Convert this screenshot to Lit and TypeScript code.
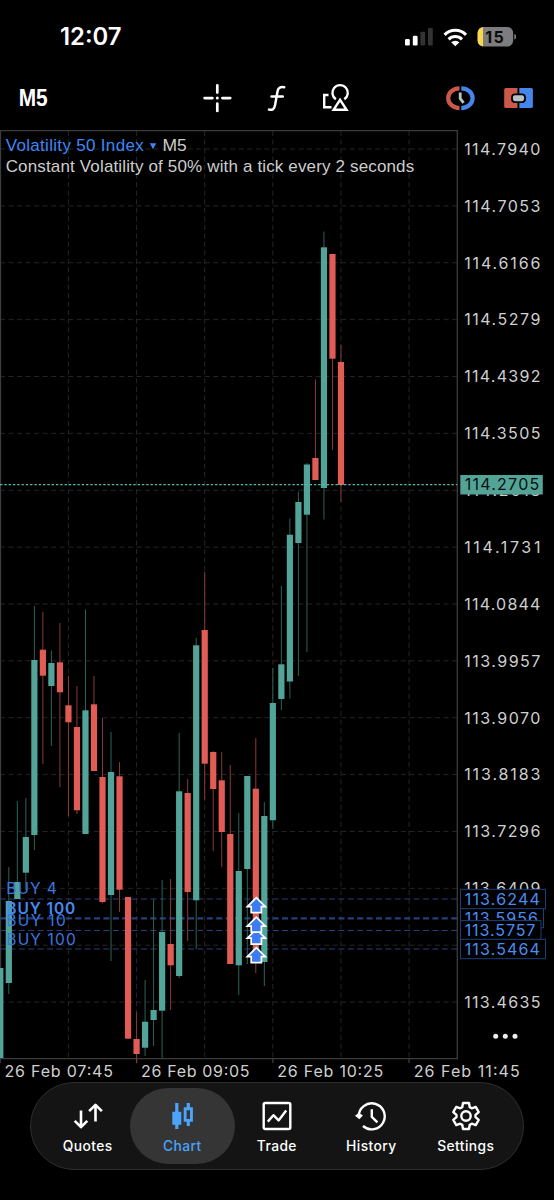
import { LitElement, html, svg, css } from "lit";
import { customElement } from "lit/decorators.js";

type Candle = [up: number, high: number, top: number, bottom: number, low: number];

const CANDLES: Candle[] = [
  [1, 968, 968, 1058, 1058],
  [1, 867, 901, 983, 994],
  [1, 801, 882, 899, 899],
  [1, 798, 837, 872.7, 890],
  [1, 606, 660, 835, 850],
  [0, 612, 649.7, 675.7, 764],
  [1, 650.5, 663, 686, 746],
  [0, 623, 662.3, 692.3, 787],
  [0, 676, 705.3, 722.3, 816],
  [0, 686, 727, 810.3, 814],
  [1, 609.5, 710.3, 834, 834],
  [0, 676, 704.3, 771, 771],
  [0, 718, 777, 902, 903.5],
  [1, 732, 772, 895, 961],
  [0, 762, 776.3, 889.7, 912],
  [0, 897, 897, 1038.7, 1038.7],
  [0, 1012, 1039, 1054, 1063],
  [1, 980, 1021.7, 1047.7, 1056],
  [1, 899.5, 1010, 1020, 1046],
  [1, 880, 932, 1010.7, 1058],
  [0, 879, 944, 965.3, 1010],
  [1, 733, 791.3, 976, 978],
  [0, 779, 793, 892, 941],
  [1, 638, 645.3, 900.3, 949],
  [0, 572, 630, 763.7, 799.5],
  [0, 751, 752, 789, 851],
  [0, 752, 780.3, 832, 867],
  [0, 765, 834, 964, 964],
  [1, 813, 871, 965.3, 995],
  [1, 776, 776, 869, 964],
  [0, 738, 788.7, 960, 973],
  [1, 802, 816, 962, 986],
  [1, 668, 703, 820.3, 829],
  [1, 586, 664.3, 699, 710],
  [1, 518.5, 534.7, 681.5, 698.5],
  [1, 491.5, 502, 543, 676],
  [1, 463, 464.5, 514.7, 652],
  [0, 379.5, 458, 480, 480],
  [1, 231.5, 247.3, 488, 519.5],
  [0, 254, 254, 358.7, 450],
  [0, 345, 362, 485, 502],
];

const PRICES = [
  "114.7940", "114.7053", "114.6166", "114.5279", "114.4392", "114.3505",
  "114.2618", "114.1731", "114.0844", "113.9957", "113.9070", "113.8183",
  "113.7296", "113.6409", "", "113.4635",
];
const TIMES: [number, number, string][] = [
  [4.5, 108.5, "26 Feb 07:45"], [141, 108.5, "26 Feb 09:05"],
  [277.3, 106, "26 Feb 10:25"], [413.7, 106, "26 Feb 11:45"],
];
const TABS = ["Quotes", "Chart", "Trade", "History", "Settings"];

const priceY = (i: number) => 149 + i * 56.873;
const timeX = (i: number) => 0.3 + i * 68.13;
const candleX = (i: number) => 0.3 + i * 8.517;

// Outline of a six-toothed gear centred at 16,16.
const gearPath = () => {
  const pts: string[] = [];
  for (let t = 0; t < 6; t++) {
    const a = t * 60 - 90;
    for (const [d, r] of [[-23, 9.6], [-13, 13.3], [13, 13.3], [23, 9.6]]) {
      const rad = ((a + d) * Math.PI) / 180;
      pts.push(`${(16 + r * Math.cos(rad)).toFixed(2)} ${(16 + r * Math.sin(rad)).toFixed(2)}`);
    }
  }
  return `M${pts.join("L")}Z`;
};

@customElement("price-chart")
class PriceChart extends LitElement {
  static styles = css`
    :host { display: block; }
    svg { display: block; width: 554px; height: 952px; }
    text { font-family: Inter, "Liberation Sans", sans-serif; }
    .grid { stroke: #252529; stroke-width: 1; stroke-dasharray: 5 3.53; }
    .frame { stroke: #3c3c3e; stroke-width: 1.3; fill: none; }
    .up { fill: #52a498; }
    .down { fill: #e05c54; }
    .wup { stroke: #2c6359; stroke-width: 1; }
    .wdown { stroke: #8a3a36; stroke-width: 1; }
    .last { stroke: #59b9a6; stroke-width: 1.4; stroke-dasharray: 2.4 1.9; }
    .order { stroke: #263f78; stroke-width: 1.2; stroke-dasharray: 6 3.4; }
    .heavy { stroke-width: 2.2; }
    .axis { fill: #cfcfcf; font-size: 16px; }
    .buy { fill: #3c78e0; font-size: 15.5px; }
    .bold { font-weight: 600; fill: #468bf5; }
    .tag { fill: #000; stroke: #1c3f78; stroke-width: 1; }
    .tagtext { fill: #4a8df2; font-size: 16px; }
    .now { fill: #53a497; }
    .nowtext { fill: #06110f; font-size: 16px; }
    .symbol, .desc { font-family: "Liberation Sans", Arial, sans-serif; font-size: 17px; }
    .symbol { fill: #3f86f6; }
    .desc { fill: #cdcdcd; }
    .arrow { fill: #3c7bf0; stroke: #fff; stroke-width: 1.7; }
    .dot { fill: #eee; }
  `;

  private candle([up, high, top, bottom, low]: Candle, i: number) {
    const x = candleX(i);
    return svg`
      <line class=${up ? "wup" : "wdown"} x1=${x} x2=${x} y1=${high} y2=${low}></line>
      <rect class=${up ? "up" : "down"} x=${x - 3.1} y=${top} width="6.2" height=${bottom - top}></rect>`;
  }

  private tag(y: number, w: number, label: string) {
    return svg`
      <rect class="tag" x="460.5" y=${y - 9.7} width=${w} height="19.4"></rect>
      <text class="tagtext" x="464.7" y=${y + 5.7} textLength=${w - 9.8}>${label}</text>`;
  }

  private buy(y: number, len: number, label: string, bold = false) {
    return svg`<text class="buy ${bold ? "bold" : ""}" x="6.3" y=${y} textLength=${len}>${label}</text>`;
  }

  render() {
    return html`<svg viewBox="0 130 554 952">
      ${PRICES.map((_, i) => svg`<line class="grid" x1="0" x2="461" y1=${priceY(i)} y2=${priceY(i)}></line>`)}
      ${[1, 2, 3, 4, 5, 6].map((i) => svg`<line class="grid" x1=${timeX(i)} x2=${timeX(i)} y1="131" y2="1058"></line>`)}
      ${[0, 2, 4, 6].map((i) => svg`<line class="frame" x1=${timeX(i)} x2=${timeX(i)} y1="1059" y2="1063"></line>`)}
      <path class="frame" d="M.5 1058.7V130.7H457.3V1058.7Z"></path>
      ${[899, 930.5, 949].map((y) => svg`<line class="order" x1="0" x2="457" y1=${y} y2=${y}></line>`)}
      <line class="order heavy" x1="0" x2="457" y1="918.4" y2="918.4"></line>
      ${CANDLES.map((c, i) => this.candle(c, i))}
      <line class="last" x1="0" x2="457" y1="484.6" y2="484.6"></line>
      ${[949, 930.5, 918.5, 899].map((y) => svg`
        <path class="arrow" d="M256.3 ${y - 1.3}l9 9h-3.900v6h-10.200v-6h-3.900z"></path>`)}
      ${this.buy(894.4, 50.5, "BUY 4")}
      ${this.buy(914, 69, "BUY 100", true)}
      ${this.buy(926, 59.5, "BUY 10")}
      ${this.buy(944.6, 69.5, "BUY 100")}
      ${PRICES.map((p, i) => p && svg`<text class="axis" x="464.2" y=${priceY(i) + 5.8} textLength="76.2">${p}</text>`)}
      <rect class="now" x="460.3" y="475" width="82.5" height="19.5"></rect>
      <text class="nowtext" x="464.7" y="490.4" textLength="74.5">114.2705</text>
      ${this.tag(918, 83, "113.5956")}
      ${this.tag(899, 85, "113.6244")}
      ${this.tag(930.3, 80.5, "113.5757")}
      ${this.tag(949, 85, "113.5464")}
      ${[495.7, 505.3, 515].map((x) => svg`<circle class="dot" cx=${x} cy="1036.3" r="2.5"></circle>`)}
      ${TIMES.map(([x, w, t]) => svg`<text class="axis" x=${x} y="1076.6" textLength=${w}>${t}</text>`)}
      <text class="symbol" x="5.7" y="151" textLength="138">Volatility 50 Index</text>
      <path class="symbol" d="M149.8 143.2h6.4l-3.2 6z"></path>
      <text class="desc" x="162.5" y="151" textLength="24.3" lengthAdjust="spacingAndGlyphs">M5</text>
      <text class="desc" x="5.7" y="172.2" textLength="408.5">Constant Volatility of 50% with a tick every 2 seconds</text>
    </svg>`;
  }
}

@customElement("tab-icon")
class TabIcon extends LitElement {
  static properties = { name: {} };
  declare name: string;
  static styles = css`
    :host { display: block; }
    svg { display: block; width: 32px; height: 32px; fill: none; stroke: currentColor; stroke-width: 2.4; stroke-linejoin: round; }
    .solid { fill: currentColor; stroke: none; }
    .heavy { stroke-width: 2.6; }
  `;
  private glyphs = {
    Quotes: svg`<path class="heavy" d="M9 10.500V27M2.700 20.800L9 27.200l6.300-6.400M23.500 21.500V5M17.100 11.200l6.400-6.400 6.400 6.400"></path>`,
    Chart: svg`<path class="solid" d="M9.200 3h3.200v8.700h2.900v13h-2.900V29H9.200v-4.300H6.300v-13h2.900z"></path>
      <path class="solid" d="M20.700 3h3.200v4.300h3v14.500h-3V26h-3.200v-4.200h-3V7.300h3zM20.600 10.200v8.700h3.400v-8.700z" fill-rule="evenodd"></path>`,
    Trade: svg`<rect x="2.700" y="3" width="26.600" height="26" rx="1.500"></rect><path d="M6.800 21.600l5.600-6.400 5.200 5.200 7.600-9.800"></path>`,
    History: svg`<path d="M3.700 16.300A13 13 0 1 1 8 26M16.800 9.200v7.600l5.600 5.600"></path><path class="solid" d="M0 15.800L4 12.800 7.900 15.400 4.400 19.200z"></path>`,
    Settings: svg`<circle cx="16" cy="16" r="4.700"></circle><path d=${gearPath()}></path>`,
  };
  render() {
    return html`<svg viewBox="0 0 32 32">${this.glyphs[this.name as keyof typeof this.glyphs]}</svg>`;
  }
}

@customElement("app-root")
class AppRoot extends LitElement {
  static styles = css`
    :host { display: flex; flex-direction: column; box-sizing: border-box; width: 554px; height: 1200px; overflow: hidden; background: #000; color: #fff; font-family: Inter, "Liberation Sans", sans-serif; }
    svg { display: block; }
    .status { display: flex; align-items: center; justify-content: space-between; height: 74px; padding: 0 38px 0 60px; box-sizing: border-box; }
    .clock { font-size: 23.8px; font-weight: 600; line-height: 26px; }
    .signals { flex: none; }
    .tools { display: flex; align-items: flex-start; height: 56px; padding: 0 20px; box-sizing: border-box; }
    .toolicons { flex: none; overflow: visible; }
    .batt { font: 700 16px Inter, sans-serif; }
    .mframe { font: 700 23px "Liberation Sans", sans-serif; }
    .tabs { display: flex; flex: none; box-sizing: border-box; width: 494px; height: 87.5px; margin: 0 0 0 30px; padding: 5px 10px 5px 9.5px; border: 1px solid #2e2e2f; border-radius: 44px; background: #141415; }
    .tab { flex: 1; display: flex; flex-direction: column; align-items: center; padding-top: 12px; gap: 5px; border-radius: 38px; font-size: 13.8px; font-weight: 500; line-height: 18px; letter-spacing: .4px; }
    .active { flex: 0 0 105px; margin: 0 -5.2px; background: #353536; color: #4ba3fa; }
  `;

  render() {
    return html`
      <div class="status">
        <span class="clock">12:07</span>
        <svg class="signals" width="112" height="24" viewBox="404 25 112 24">
          <g fill="#fff"><rect x="405" y="39" width="4.800" height="6.500" rx="1.300"></rect><rect x="412.800" y="35.800" width="4.800" height="9.700" rx="1.300"></rect></g>
          <g fill="#333"><rect x="420.400" y="31.800" width="4.800" height="13.700" rx="1.300"></rect><rect x="428" y="28" width="4.800" height="17.500" rx="1.300"></rect></g>
          <g fill="none" stroke="#fff" stroke-width="3.100">
            <path d="M444.600 34.800a15 15 0 0 1 21.400 0M448.600 39.300a9.500 9.500 0 0 1 13.400 0"></path>
          </g>
          <path fill="#fff" d="M451.200 42.300a5.900 5.900 0 0 1 8.200 0l-4.100 4z"></path>
          <clipPath id="cell"><rect x="477.600" y="27" width="35.600" height="19.600" rx="6"></rect></clipPath>
          <g clip-path="url(#cell)"><rect x="477" y="27" width="37" height="20" fill="#7d7d7f"></rect><rect x="477" y="27" width="6" height="20" fill="#f9d74a"></rect></g>
          <path d="M514.300 34q2 .5 2 2.800t-2 2.800z" fill="#7d7d7f"></path>
          <text class="batt" x="485.300" y="42.600" textLength="18.500" fill="#0a0a0a">15</text>
        </svg>
      </div>
      <div class="tools">
        <svg class="toolicons" width="514" height="48" viewBox="20 74 514 48">
          <text class="mframe" x="18.700" y="105.900" textLength="29" lengthAdjust="spacingAndGlyphs" fill="#fff">M5</text>
          <g fill="none" stroke="#fff" stroke-width="2.700" stroke-linecap="round">
            <path d="M217.300 85.300v7.300M217.300 103.700v7.300M204.600 98.100h7.800M222.400 98.100h7.800"></path>
          </g>
          <circle cx="217.300" cy="98.100" r="1.500" fill="#fff"></circle>
          <path fill="none" stroke="#fff" stroke-width="2.500" stroke-linecap="round" d="M284.200 87.200c-4-.9-6.100 1-6.700 4.200l-2.500 14c-.7 3.500-2.500 5.100-6 4.200M271.500 96.600h11.300"></path>
          <g fill="none" stroke="#fff" stroke-width="2.400">
            <path d="M328.500 95h-4.300v12.300h7.300"></path>
            <path d="M335.900 99.300a7.700 7.700 0 1 1 8.400 0"></path>
            <path d="M340.100 99.800l6.500 10h-13z"></path>
          </g>
          <g fill="none" stroke-width="4.200">
            <path stroke="#cc584a" d="M459.500 88.300a11.300 9.900 0 0 0 0 19.800"></path>
            <path stroke="#4585ec" d="M461.300 88.300a11.300 9.900 0 0 1 0 19.800"></path>
          </g>
          <path fill="none" stroke="#b8c2c4" stroke-width="2.800" d="M460.200 92.500v6l3.400 4.300"></path>
          <path fill="#cc584a" d="M505.800 88h11.700v20h-11.700a1.600 1.600 0 0 1-1.600-1.600v-16.800a1.600 1.600 0 0 1 1.600-1.600z"></path>
          <path fill="#4585ec" d="M519.300 88h12a1.600 1.600 0 0 1 1.600 1.600v16.800a1.600 1.600 0 0 1-1.600 1.600h-12z"></path>
          <rect x="512" y="94.300" width="13" height="7.800" rx="3" fill="#b8c2c4" stroke="#000" stroke-width="1.800"></rect>
        </svg>
      </div>
      <price-chart></price-chart>
      <nav class="tabs">
        ${TABS.map((t) => html`<div class="tab ${t === "Chart" ? "active" : ""}"><tab-icon name=${t}></tab-icon><span>${t}</span></div>`)}
      </nav>`;
  }
}
